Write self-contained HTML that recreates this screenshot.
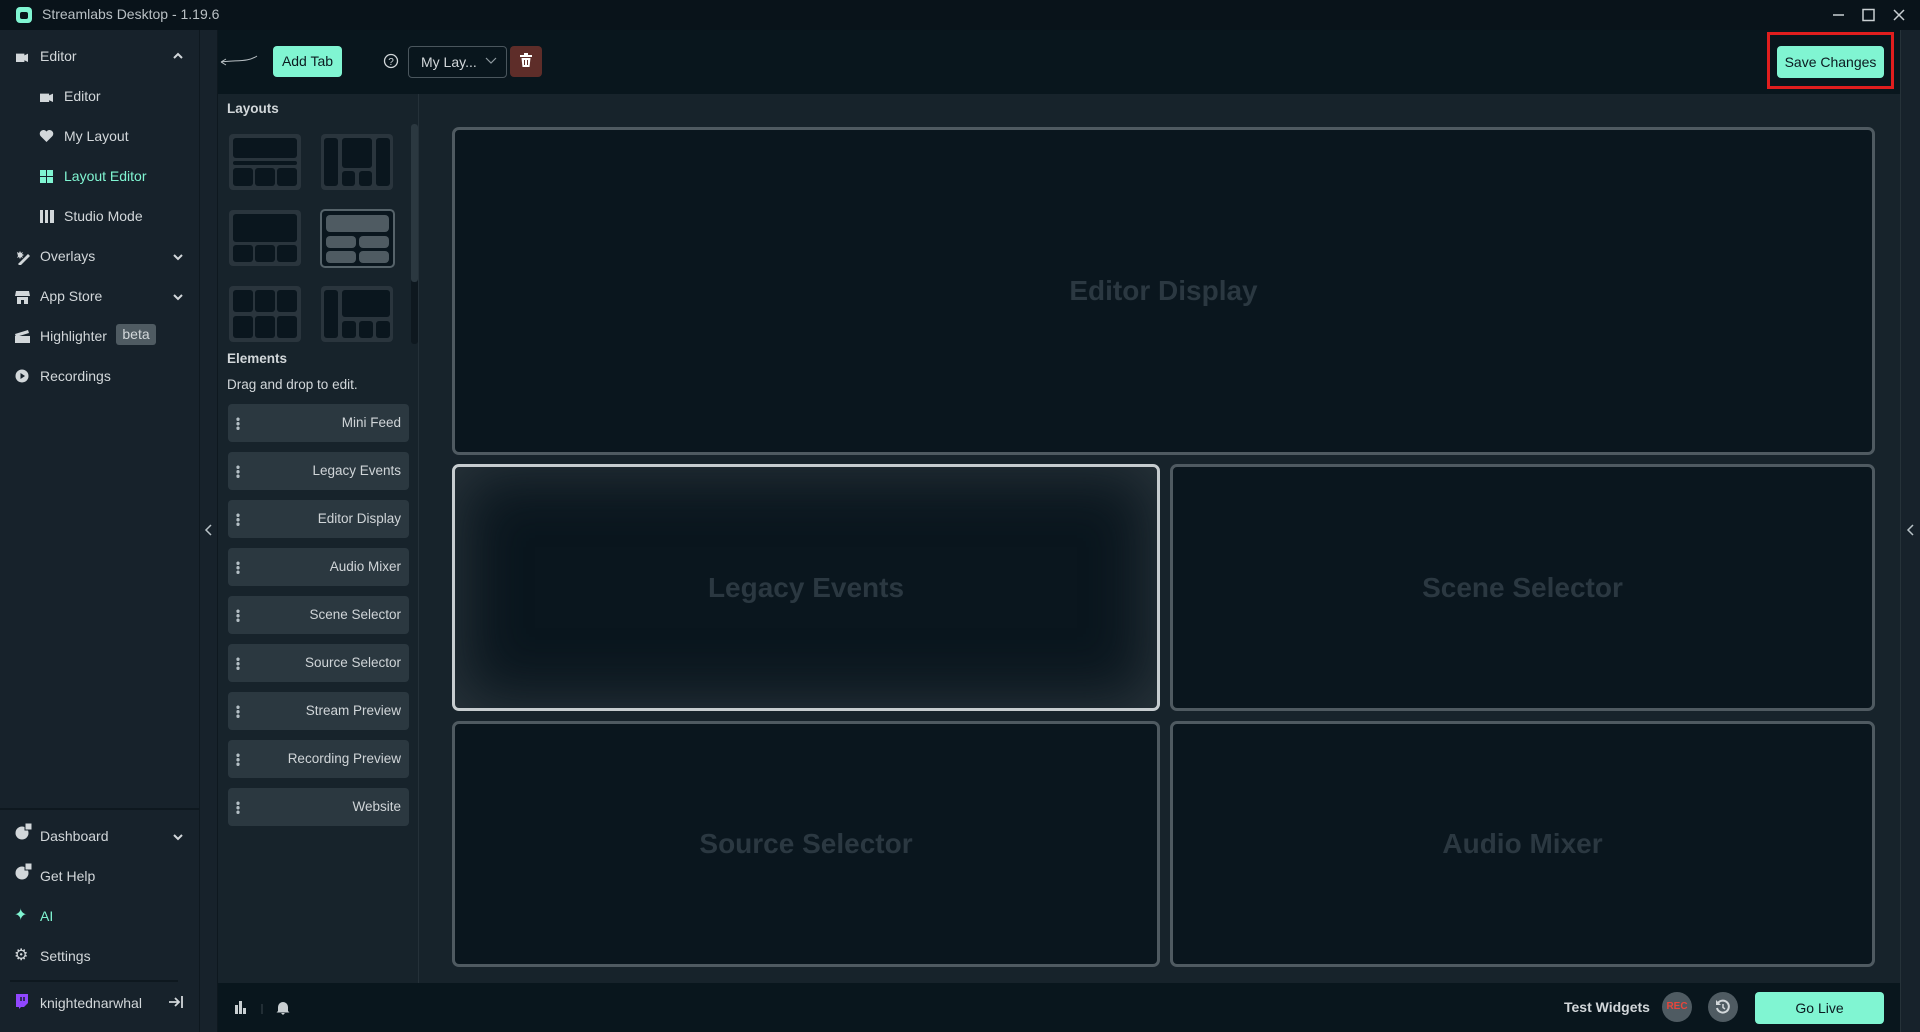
<!DOCTYPE html>
<html><head><meta charset="utf-8"><style>
*{box-sizing:border-box;margin:0;padding:0}
body{width:1920px;height:1032px;overflow:hidden;background:#17232b;font-family:"Liberation Sans",sans-serif;color:#d2d7da;position:relative}
.a{position:absolute}
.title{left:0;top:0;width:1920px;height:30px;background:#09131a}
.side{left:0;top:30px;width:200px;height:1002px;background:#17222b;border-right:1px solid #0e181f}
.strip{left:200px;top:30px;width:18px;height:1002px;background:#17222b;border-right:1px solid #0e181f}
.nav{font-size:14px;color:#d2d7da;white-space:nowrap;margin-top:2px}
.tb{left:218px;top:30px;width:1682px;height:64px;background:#09161d}
.lp{left:218px;top:94px;width:201px;height:889px;background:#17232b;border-right:1px solid #253139}
.bb{left:218px;top:983px;width:1682px;height:49px;background:#09161d}
.rs{left:1900px;top:30px;width:20px;height:1002px;background:#17222b;border-left:1px solid #263239}
.box{background:#0a161e;border:3px solid #4f5a61;border-radius:7px;display:flex;align-items:center;justify-content:center;font-weight:bold;font-size:28px;color:#2b3841}
.el{left:228px;width:181px;height:38px;background:#2b3840;border-radius:4px;font-size:13.5px;text-align:right;padding-right:8px;line-height:38px;color:#d0d5d8}
.el i{position:absolute;left:8px;top:13px;width:4px;height:13px;background:radial-gradient(circle,#b5c0c6 1.6px,transparent 1.8px) 0 0/4px 4.5px repeat-y}
.btn{background:#80f5d2;color:#0b1a20;border-radius:4px;font-size:14px;text-align:center}
</style></head><body>
<div class="a title"></div>
<div class="a" style="left:16px;top:7px;width:16px;height:16px;background:#80f5d2;border-radius:4px"></div>
<div class="a" style="left:20px;top:12px;width:8px;height:7px;background:#09131a;border-radius:2px"></div>
<div class="a" style="left:42px;top:6px;font-size:14px;color:#b9c0c4">Streamlabs Desktop - 1.19.6</div>
<svg class="a" style="left:1830px;top:6px" width="85" height="18"><path d="M3 9h11" stroke="#c9cfd2" stroke-width="1.5"/><rect x="33" y="3.5" width="11" height="11" fill="none" stroke="#c9cfd2" stroke-width="1.5"/><path d="M64 4l10 10M74 4L64 14" stroke="#c9cfd2" stroke-width="1.5"/></svg>

<div class="a side"></div>
<div class="a strip"></div>
<svg class="a" style="left:204px;top:523px" width="10" height="14"><path d="M7 2L2 7l5 5" stroke="#b9c3c8" stroke-width="1.5" fill="none"/></svg>

<div class="a" style="left:16px;top:50px;width:12px;height:12px;background:#d2d7da;clip-path:polygon(0 30%,70% 30%,70% 45%,100% 30%,100% 100%,70% 85%,70% 100%,0 100%)"></div>
<div class="a nav" style="left:40px;top:46px">Editor</div>
<svg class="a" style="left:172px;top:52px" width="12" height="8"><path d="M2 6l4-4 4 4" stroke="#d2d7da" stroke-width="2" fill="none"/></svg>
<div class="a" style="left:40px;top:90px;width:13px;height:12px;background:#d2d7da;clip-path:polygon(0 30%,70% 30%,70% 45%,100% 30%,100% 100%,70% 85%,70% 100%,0 100%)"></div>
<div class="a nav" style="left:64px;top:86px">Editor</div>
<svg class="a" style="left:39px;top:129px" width="15" height="14"><path d="M7.5 13L1.5 7A3.3 3.3 0 0 1 7.5 2.5 3.3 3.3 0 0 1 13.5 7z" fill="#d2d7da"/></svg>
<div class="a nav" style="left:64px;top:126px">My Layout</div>
<svg class="a" style="left:40px;top:170px" width="14" height="13"><g fill="#80f5d2"><rect x="0" y="0" width="6" height="6"/><rect x="7" y="0" width="6" height="6"/><rect x="0" y="7" width="6" height="6"/><rect x="7" y="7" width="6" height="6"/></g></svg>
<div class="a nav" style="left:64px;top:166px;color:#80f5d2">Layout Editor</div>
<svg class="a" style="left:40px;top:210px" width="14" height="13"><g fill="#d2d7da"><rect x="0" y="0" width="3" height="13"/><rect x="5" y="0" width="3" height="13"/><rect x="10" y="0" width="4" height="13"/></g></svg>
<div class="a nav" style="left:64px;top:206px">Studio Mode</div>
<svg class="a" style="left:15px;top:250px" width="16" height="15"><path d="M3 14l10-10 2 2-10 10z M2 2l2 1 1-2 1 2 2-1-1 2 2 1-2 1 1 2-2-1-1 2-1-2-2 1 1-2z" fill="#d2d7da"/></svg>
<div class="a nav" style="left:40px;top:246px">Overlays</div>
<svg class="a" style="left:172px;top:253px" width="12" height="8"><path d="M2 2l4 4 4-4" stroke="#d2d7da" stroke-width="2" fill="none"/></svg>
<svg class="a" style="left:15px;top:290px" width="15" height="14"><path d="M1 1h13l1 5H0z M2 7h11v7H9v-4H6v4H2z" fill="#d2d7da"/></svg>
<div class="a nav" style="left:40px;top:286px">App Store</div>
<svg class="a" style="left:172px;top:293px" width="12" height="8"><path d="M2 2l4 4 4-4" stroke="#d2d7da" stroke-width="2" fill="none"/></svg>
<svg class="a" style="left:15px;top:330px" width="15" height="13"><path d="M0 4l13-4 1 3-13 4z M0 6h15v7H0z" fill="#d2d7da"/></svg>
<div class="a nav" style="left:40px;top:326px">Highlighter</div>
<div class="a" style="left:116px;top:324px;width:40px;height:21px;background:#4f5b62;border-radius:3px;font-size:14px;text-align:center;line-height:21px;color:#d2d7da">beta</div>
<svg class="a" style="left:15px;top:369px" width="14" height="14"><circle cx="7" cy="7" r="6.5" fill="#d2d7da"/><path d="M5.5 4v6l4.5-3z" fill="#17222b"/></svg>
<div class="a nav" style="left:40px;top:366px">Recordings</div>

<div class="a" style="left:0;top:808px;width:200px;height:2px;background:#0e181f"></div>
<svg class="a" style="left:15px;top:822px" width="18" height="18"><circle cx="7" cy="11" r="6.5" fill="#d2d7da"/><rect x="10" y="1" width="7" height="7" fill="#d2d7da" stroke="#17222b"/></svg>
<div class="a nav" style="left:40px;top:826px">Dashboard</div>
<svg class="a" style="left:172px;top:833px" width="12" height="8"><path d="M2 2l4 4 4-4" stroke="#d2d7da" stroke-width="2" fill="none"/></svg>
<svg class="a" style="left:15px;top:862px" width="18" height="18"><circle cx="7" cy="11" r="6.5" fill="#d2d7da"/><rect x="10" y="1" width="7" height="7" fill="#d2d7da" stroke="#17222b"/></svg>
<div class="a nav" style="left:40px;top:866px">Get Help</div>
<div class="a" style="left:14px;top:905px;color:#80f5d2;font-size:16px">✦</div>
<div class="a nav" style="left:40px;top:906px;color:#80f5d2">AI</div>
<div class="a" style="left:14px;top:945px;color:#d2d7da;font-size:16px">⚙</div>
<div class="a nav" style="left:40px;top:946px">Settings</div>
<div class="a" style="left:10px;top:980px;width:168px;height:2px;background:#0e181f"></div>
<svg class="a" style="left:15px;top:994px" width="13" height="15"><path d="M1 0h12v9l-4 4H6l-2 2v-2H1z" fill="#9147ff"/><path d="M6 3v4M9 3v4" stroke="#17222b" stroke-width="1.5"/></svg>
<div class="a nav" style="left:40px;top:993px">knightednarwhal</div>
<svg class="a" style="left:168px;top:995px" width="16" height="14"><path d="M1 7h9M7 3l4 4-4 4" stroke="#d2d7da" stroke-width="1.8" fill="none"/><path d="M14 1v12" stroke="#d2d7da" stroke-width="1.8"/></svg>

<div class="a tb"></div>
<svg class="a" style="left:218px;top:52px" width="42" height="20"><path d="M39 4C30 10 20 8 3 10M3 10l5-3M3 10l5 3" stroke="#b9c0c4" stroke-width="1" fill="none"/></svg>
<div class="a btn" style="left:273px;top:46px;width:69px;height:31px;line-height:31px">Add Tab</div>
<svg class="a" style="left:383px;top:53px" width="16" height="16"><circle cx="8" cy="8" r="6.5" stroke="#d2d7da" stroke-width="1.3" fill="none"/><text x="8" y="12" font-size="10" text-anchor="middle" fill="#d2d7da" font-family="Liberation Sans">?</text></svg>
<div class="a" style="left:408px;top:46px;width:99px;height:32px;border:1px solid #4a565d;border-radius:4px;font-size:14px;line-height:30px;padding-left:12px;color:#d2d7da">My Lay...</div>
<svg class="a" style="left:485px;top:57px" width="12" height="8"><path d="M1 1l5 5 5-5" stroke="#8f9aa0" stroke-width="1.2" fill="none"/></svg>
<div class="a" style="left:510px;top:46px;width:32px;height:31px;background:#5e2d29;border-radius:4px"></div>
<svg class="a" style="left:519px;top:53px" width="14" height="15"><path d="M1 3h12M5 1h4" stroke="#fff" stroke-width="2"/><path d="M2.5 5h9l-1 9h-7z" fill="#fff"/><path d="M5.5 7v5M8.5 7v5" stroke="#5e2d29" stroke-width="1"/></svg>
<div class="a" style="left:1767px;top:32px;width:127px;height:57px;border:3px solid #e01e1e"></div>
<div class="a btn" style="left:1777px;top:46px;width:107px;height:32px;line-height:32px">Save Changes</div>

<div class="a lp"></div>
<div class="a" style="left:227px;top:101px;font-size:13.5px;font-weight:bold;color:#d2d7da">Layouts</div>
<div class="a" style="left:411px;top:124px;width:7px;height:220px;background:#0e181f;border-radius:3px"></div>
<div class="a" style="left:411px;top:124px;width:7px;height:158px;background:#2b3840;border-radius:3px"></div>
<svg class="a" style="left:229px;top:134px" width="166" height="210">
<g><rect width="72" height="56" rx="4" fill="#2a353d"/><g fill="#0a161e"><rect x="4" y="4" width="64" height="20" rx="3"/><rect x="4" y="27" width="64" height="4" rx="2"/><rect x="4" y="34" width="20" height="18" rx="3"/><rect x="26" y="34" width="20" height="18" rx="3"/><rect x="48" y="34" width="20" height="18" rx="3"/></g></g>
<g transform="translate(92,0)"><rect width="72" height="56" rx="4" fill="#2a353d"/><g fill="#0a161e"><rect x="3" y="4" width="14" height="48" rx="3"/><rect x="21" y="4" width="30" height="30" rx="3"/><rect x="21" y="37" width="13" height="15" rx="3"/><rect x="38" y="37" width="13" height="15" rx="3"/><rect x="55" y="4" width="14" height="48" rx="3"/></g></g>
<g transform="translate(0,76)"><rect width="72" height="56" rx="4" fill="#2a353d"/><g fill="#0a161e"><rect x="4" y="4" width="64" height="28" rx="3"/><rect x="4" y="35" width="20" height="17" rx="3"/><rect x="26" y="35" width="20" height="17" rx="3"/><rect x="48" y="35" width="20" height="17" rx="3"/></g></g>
<g transform="translate(91,75)"><rect x="1" y="1" width="73" height="57" rx="4" fill="#0a161e" stroke="#56636a" stroke-width="2"/><g fill="#4f5b62"><rect x="6" y="6" width="63" height="17" rx="4"/><rect x="6" y="27" width="30" height="12" rx="4"/><rect x="39" y="27" width="30" height="12" rx="4"/><rect x="6" y="42" width="30" height="12" rx="4"/><rect x="39" y="42" width="30" height="12" rx="4"/></g></g>
<g transform="translate(0,152)"><rect width="72" height="56" rx="4" fill="#2a353d"/><g fill="#0a161e"><rect x="4" y="4" width="20" height="22" rx="3"/><rect x="26" y="4" width="20" height="22" rx="3"/><rect x="48" y="4" width="20" height="22" rx="3"/><rect x="4" y="30" width="20" height="22" rx="3"/><rect x="26" y="30" width="20" height="22" rx="3"/><rect x="48" y="30" width="20" height="22" rx="3"/></g></g>
<g transform="translate(92,152)"><rect width="72" height="56" rx="4" fill="#2a353d"/><g fill="#0a161e"><rect x="3" y="4" width="14" height="48" rx="3"/><rect x="21" y="4" width="48" height="27" rx="3"/><rect x="21" y="35" width="14" height="17" rx="3"/><rect x="38" y="35" width="14" height="17" rx="3"/><rect x="55" y="35" width="14" height="17" rx="3"/></g></g>
</svg>
<div class="a" style="left:227px;top:351px;font-size:13.5px;font-weight:bold;color:#d2d7da">Elements</div>
<div class="a" style="left:227px;top:377px;font-size:13.5px;color:#d2d7da">Drag and drop to edit.</div>
<div class="a el" style="top:404px"><i></i>Mini Feed</div>
<div class="a el" style="top:452px"><i></i>Legacy Events</div>
<div class="a el" style="top:500px"><i></i>Editor Display</div>
<div class="a el" style="top:548px"><i></i>Audio Mixer</div>
<div class="a el" style="top:596px"><i></i>Scene Selector</div>
<div class="a el" style="top:644px"><i></i>Source Selector</div>
<div class="a el" style="top:692px"><i></i>Stream Preview</div>
<div class="a el" style="top:740px"><i></i>Recording Preview</div>
<div class="a el" style="top:788px"><i></i>Website</div>

<div class="a box" style="left:452px;top:127px;width:1423px;height:328px">Editor Display</div>
<div class="a box" style="left:452px;top:464px;width:708px;height:247px;border-color:#c6cccf;box-shadow:inset 0 0 60px 8px #29343b">Legacy Events</div>
<div class="a box" style="left:1170px;top:464px;width:705px;height:247px">Scene Selector</div>
<div class="a box" style="left:452px;top:721px;width:708px;height:246px">Source Selector</div>
<div class="a box" style="left:1170px;top:721px;width:705px;height:246px">Audio Mixer</div>

<div class="a rs"></div>
<svg class="a" style="left:1906px;top:523px" width="10" height="14"><path d="M7 2L2 7l5 5" stroke="#b9c3c8" stroke-width="1.5" fill="none"/></svg>

<div class="a bb"></div>
<svg class="a" style="left:235px;top:999px" width="60" height="16"><g fill="#c9cfd2"><rect x="0" y="6" width="3" height="9"/><rect x="4" y="2" width="3" height="13"/><rect x="8" y="9" width="3" height="6"/></g><path d="M27 5v10" stroke="#3a464d"/><path d="M43 12V8a5 5 0 0 1 10 0v4l1.5 1.5h-13z M46 14h4l-2 2z" fill="#c9cfd2"/></svg>
<div class="a" style="left:1564px;top:999px;font-size:14px;font-weight:bold;color:#d2d7da">Test Widgets</div>
<div class="a" style="left:1662px;top:992px;width:30px;height:30px;border-radius:50%;background:#4f5b62;color:#e8463c;font-size:10px;font-weight:bold;text-align:center;line-height:30px">REC</div>
<div class="a" style="left:1708px;top:992px;width:30px;height:30px;border-radius:50%;background:#4f5b62"></div>
<svg class="a" style="left:1714px;top:998px" width="18" height="18"><path d="M4 5A6 6 0 1 1 3 10" stroke="#d2d7da" stroke-width="2" fill="none"/><path d="M2 2v5h5" fill="#d2d7da"/><path d="M9 6v3.5l2 1.5" stroke="#d2d7da" stroke-width="1.5" fill="none"/></svg>
<div class="a btn" style="left:1755px;top:992px;width:129px;height:32px;line-height:32px;font-size:14px">Go Live</div>
</body></html>
